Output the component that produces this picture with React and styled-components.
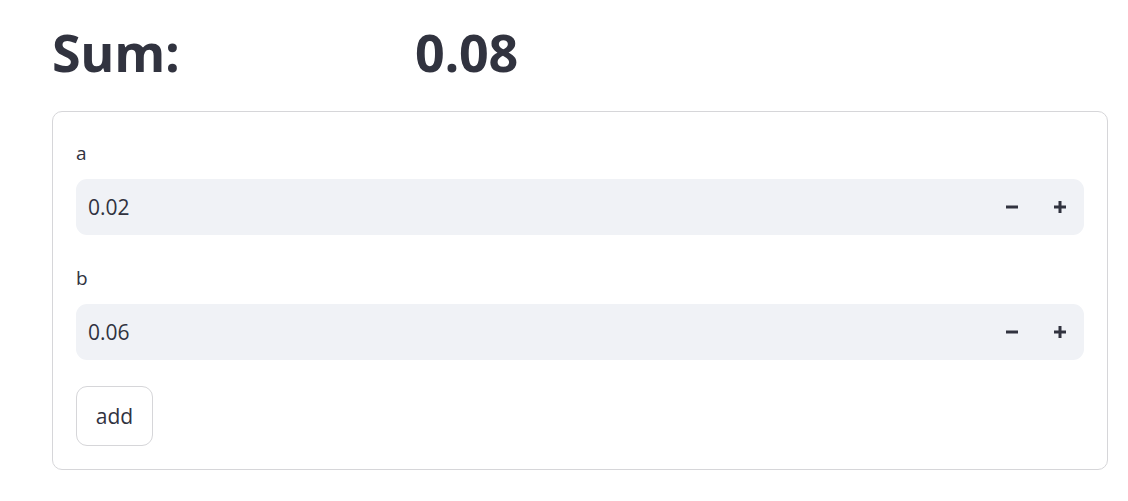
import styled, { createGlobalStyle } from 'styled-components';

const GlobalStyle = createGlobalStyle`
  body {
    margin: 0;
    background: #ffffff;
    color: #31333f;
    font-family: "Open Sans", "Noto Sans", sans-serif;
  }
`;

const Page = styled.main`
  padding: 20px 20px 0 52px;
`;

const HeadingRow = styled.div`
  display: grid;
  grid-template-columns: repeat(3, 1fr);
  column-gap: 33px;
  margin-bottom: 27px;
`;

const Heading = styled.h1`
  margin: 0;
  font-size: 52px;
  line-height: 64px;
  font-weight: 700;
  letter-spacing: -0.3px;
  color: #31333f;
`;

const Card = styled.section`
  display: flex;
  flex-direction: column;
  padding: 20px 23px 23px;
  border: 1px solid #d6d6d9;
  border-radius: 10px;
`;

const Field = styled.div`
  display: flex;
  flex-direction: column;
  margin-bottom: ${(p) => (p.$last ? '26px' : '22px')};
`;

const Label = styled.label`
  margin: 6px 0 11px;
  font-size: 19px;
  line-height: 30px;
  color: #31333f;
`;

const InputWrap = styled.div`
  display: flex;
  align-items: center;
  height: 56px;
  background: #f0f2f6;
  border-radius: 11px;
  overflow: hidden;
`;

const Input = styled.input`
  flex: 1;
  min-width: 0;
  height: 100%;
  padding: 0 12px;
  border: none;
  outline: none;
  background: transparent;
  font-family: inherit;
  font-size: 21px;
  color: #31333f;
`;

const StepButton = styled.button`
  display: flex;
  align-items: center;
  justify-content: center;
  width: 48px;
  height: 100%;
  padding: 0;
  border: none;
  background: transparent;
  color: #31333f;
  cursor: pointer;
`;

const AddButton = styled.button`
  align-self: flex-start;
  width: 77px;
  height: 60px;
  padding: 0;
  border: 1px solid #d6d6d9;
  border-radius: 11px;
  background: #ffffff;
  font-family: inherit;
  font-size: 21px;
  color: #31333f;
  cursor: pointer;
`;

const MinusIcon = () => (
  <svg width="12" height="12" viewBox="0 0 12 12">
    <rect x="0" y="4.5" width="12" height="3" fill="currentColor" />
  </svg>
);

const PlusIcon = () => (
  <svg width="12" height="12" viewBox="0 0 12 12">
    <rect x="0" y="4.5" width="12" height="3" fill="currentColor" />
    <rect x="4.5" y="0" width="3" height="12" fill="currentColor" />
  </svg>
);

const NumberInput = ({ label, value, last }) => (
  <Field $last={last}>
    <Label>{label}</Label>
    <InputWrap>
      <Input defaultValue={value} />
      <StepButton aria-label="decrement">
        <MinusIcon />
      </StepButton>
      <StepButton aria-label="increment">
        <PlusIcon />
      </StepButton>
    </InputWrap>
  </Field>
);

export default function App() {
  return (
    <>
      <GlobalStyle />
      <Page>
        <HeadingRow>
          <Heading>Sum:</Heading>
          <Heading>0.08</Heading>
        </HeadingRow>
        <Card>
          <NumberInput label="a" value="0.02" />
          <NumberInput label="b" value="0.06" last />
          <AddButton>add</AddButton>
        </Card>
      </Page>
    </>
  );
}
